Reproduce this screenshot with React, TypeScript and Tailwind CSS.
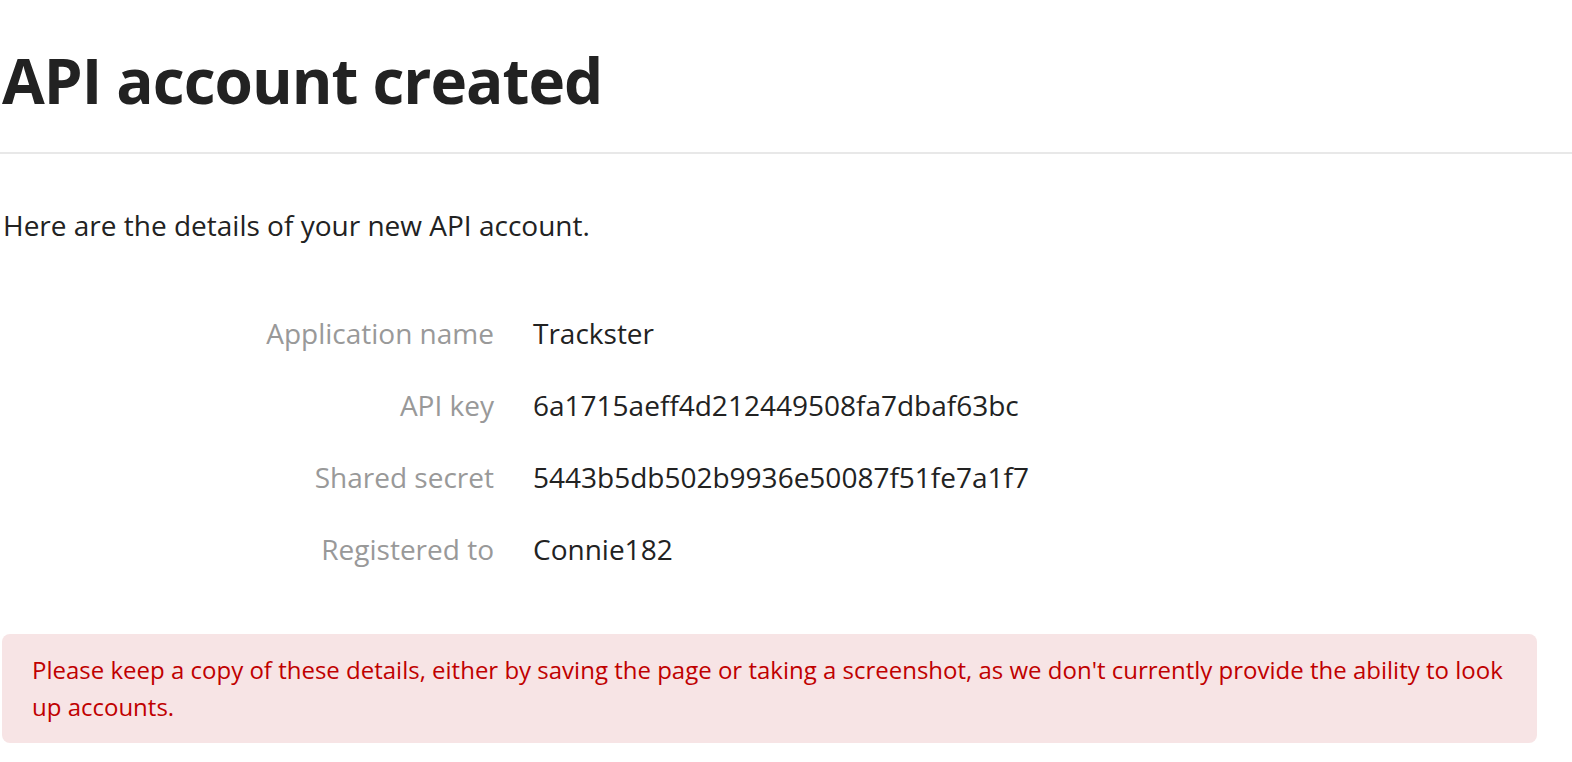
export default function App() {
    const rows = [
        ['Application name', 'Trackster'],
        ['API key', '6a1715aeff4d212449508fa7dbaf63bc'],
        ['Shared secret', '5443b5db502b9936e50087f51fe7a1f7'],
        ['Registered to', 'Connie182'],
    ]

    return (
        <div className="min-h-screen bg-white text-[#222] font-['Open_Sans',sans-serif]">
            <h1 className="pt-[45px] pl-[2px] text-[62px] font-bold leading-[70px] tracking-[-1px]">
                API account created
            </h1>
            <hr className="mt-[37px] border-0 border-t-2 border-[#e8e8e8]" />

            <p className="mt-[53px] pl-[3px] text-[28px] leading-[36px]">
                Here are the details of your new API account.
            </p>

            <dl className="mt-[72px] grid grid-cols-[494px_1fr] gap-x-[39px] gap-y-[36px] text-[28px] leading-[36px]">
                {rows.map(([label, value]) => (
                    <div key={label} className="contents">
                        <dt className="text-right text-[#999]">{label}</dt>
                        <dd>{value}</dd>
                    </div>
                ))}
            </dl>

            <div className="mt-[67px] ml-[2px] mr-[35px] rounded-[8px] bg-[#f7e4e5] px-[30px] pt-[17px] pb-[18px] text-[24px] leading-[37px] text-[#c00000]">
                Please keep a copy of these details, either by saving the page or taking a screenshot, as we don't
                currently provide the ability to look up accounts.
            </div>
        </div>
    )
}
